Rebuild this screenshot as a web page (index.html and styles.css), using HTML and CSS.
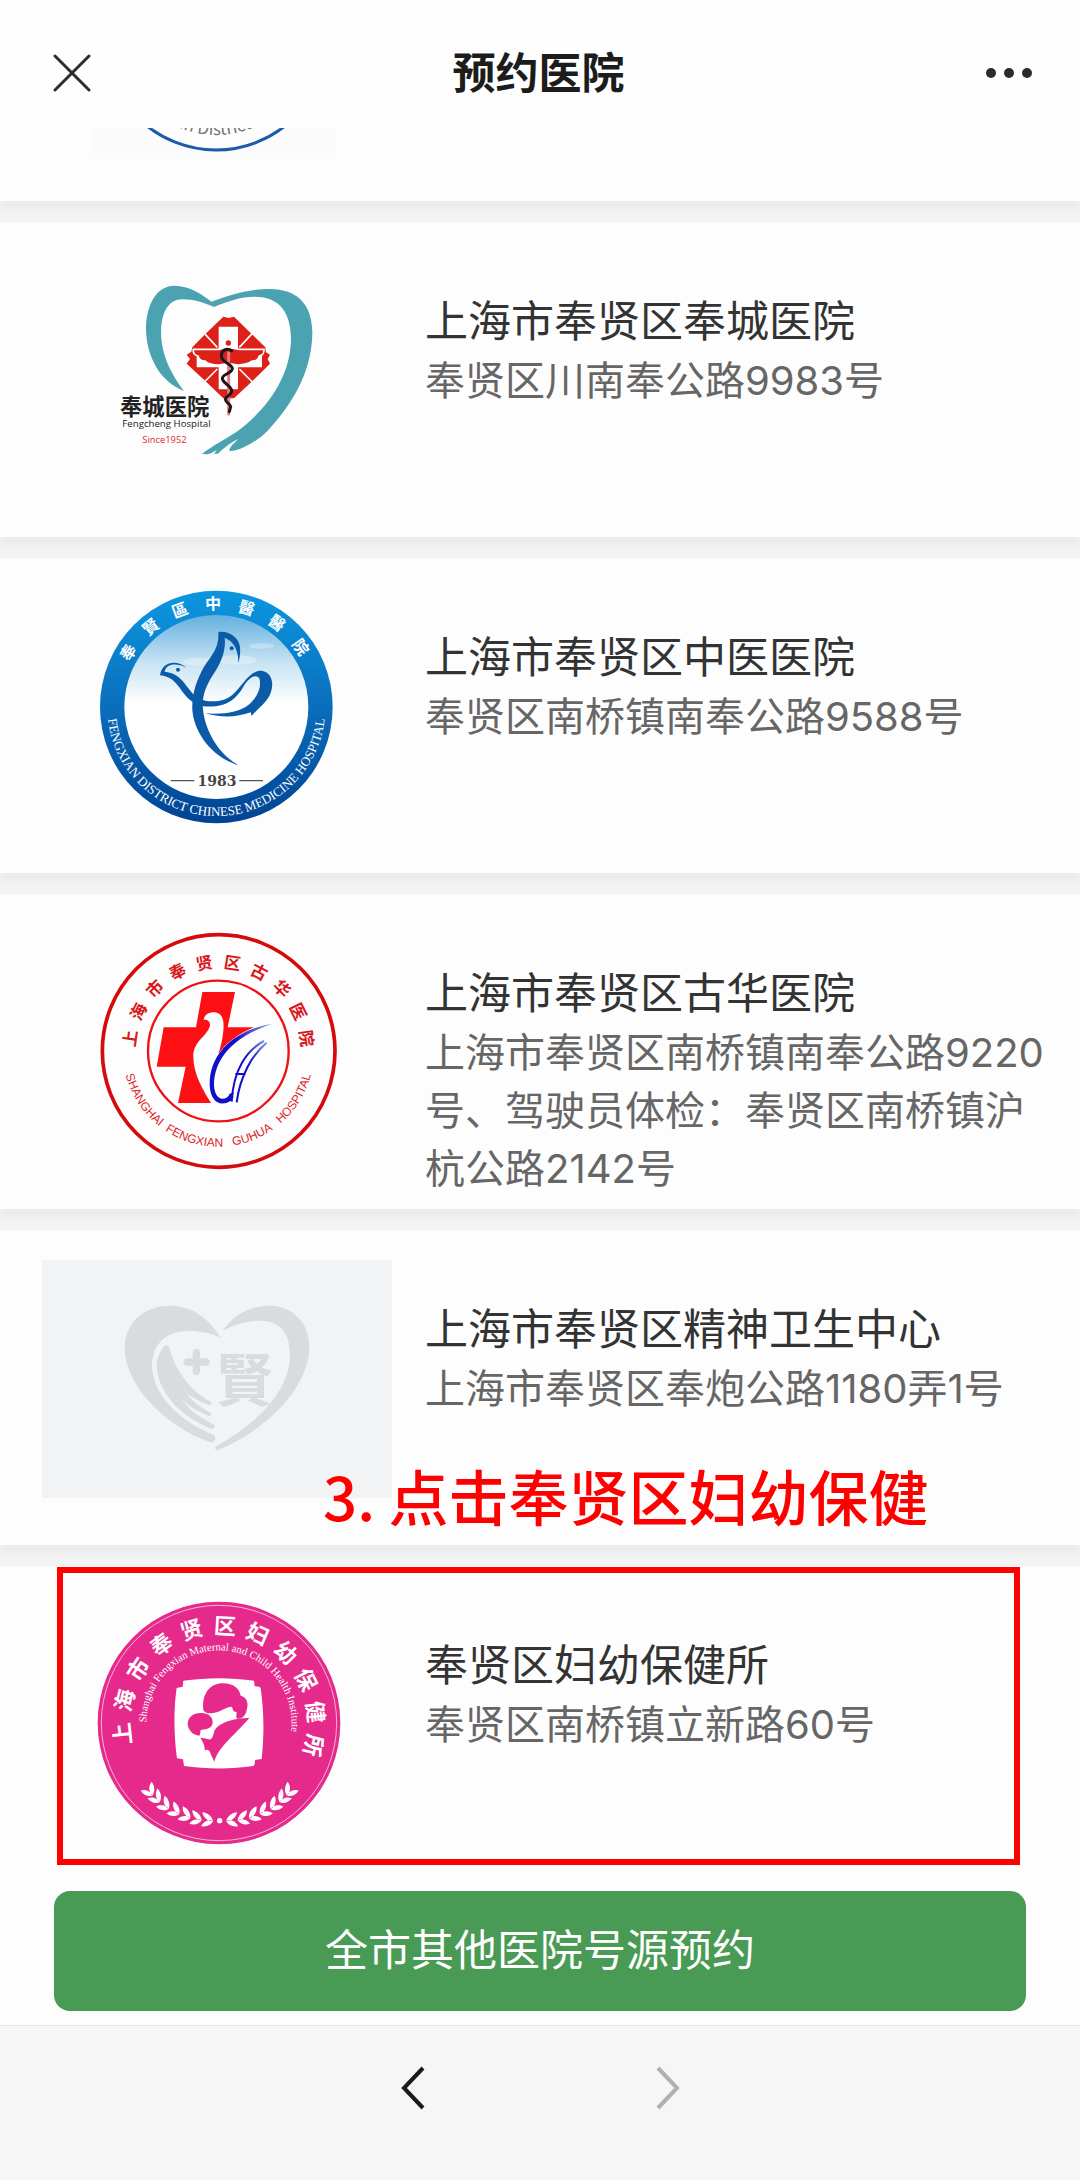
FILE: index.html
```html
<!DOCTYPE html>
<html lang="zh-CN">
<head>
  <meta charset="UTF-8">
  <meta name="viewport" content="width=device-width, initial-scale=1.0">
  <title>预约医院</title>
  <link rel="stylesheet" href="styles.css">
</head>
<body>
  <header class="topbar">
    <button class="icon-btn" type="button" aria-label="关闭">
      <svg width="38" height="38" viewBox="0 0 38 38" fill="none" stroke="#2b2b2b" stroke-width="3" stroke-linecap="round"><path d="M2 2L36 36M36 2L2 36"/></svg>
    </button>
    <h1>预约医院</h1>
    <button class="icon-btn" type="button" aria-label="更多">
      <svg width="46" height="38" viewBox="0 0 46 38" fill="#2b2b2b"><circle cx="5" cy="19" r="5"/><circle cx="23" cy="19" r="5"/><circle cx="41" cy="19" r="5"/></svg>
    </button>
  </header>

  <main class="hospital-list">
    <a class="card" href="#">
      <svg class="logo" viewBox="42 -84 350 238">
        <defs><path id="seal-arc" d="M120 39A96 96 0 0 0 312 39"/></defs>
        <rect x="94" y="-84" width="242" height="238" fill="#fbfbfb"/>
        <circle cx="216" cy="39" r="111" fill="#fdfdfd" stroke="#1d5aa8" stroke-width="3"/>
        <text font-size="17" fill="#777" text-anchor="middle"><textPath href="#seal-arc" startOffset="49%">an District</textPath></text>
      </svg>
    </a>

    <a class="card" href="#">
      <svg class="logo" viewBox="-114 -24 1050 714">
        <path fill="#4ba3b1" d="M395 125C360 100 330 78 283 77C225 78 198 140 198 210C200 290 240 365 312 393C280 350 243 290 243 215C245 150 270 118 305 118C345 118 370 128 402 141C440 125 480 110 525 110C600 110 632 160 633 235C633 350 560 450 470 515C440 535 395 558 366 582L382 583C395 580 402 573 411 569L402 581L414 581C430 565 455 545 475 537C462 550 446 563 449 573C475 575 530 545 560 515C650 420 697 320 697 215C695 130 650 88 570 87C510 86 440 108 395 125Z"/>
        <path fill="#dd2018" d="M430 170L446 174L462 170L515 222L556 262L558 277L570 284L563 297L570 311L515 365L462 415H430L376 363L320 311L330 297L320 284L334 275L337 262L376 222Z"/>
        <path stroke="#fff" stroke-width="5" d="M373 220L412 262M517 220L478 262M373 366L412 327M517 366L478 327"/>
        <path fill="#fff" d="M416 200H474V268H546V322H474V388H416V322H350V268H416Z"/>
        <path fill="#dd2018" stroke="#fff" stroke-width="5" d="M340 268H414L446 262L478 268H552C553 280 546 287 538 288C535 298 527 304 517 303C505 312 490 315 474 315L446 311L416 315C400 315 385 312 375 303C365 304 357 298 354 288C346 287 338 280 340 268Z"/>
        <circle cx="445" cy="249" r="8" fill="#dd2018"/>
        <path stroke="#e77b86" stroke-width="9" d="M446 275V466"/>
        <path fill="none" stroke="#1c1719" stroke-width="9" stroke-linecap="round" d="M455 272C440 262 424 270 424 288C424 308 455 310 457 325C458 340 427 342 427 355C427 370 452 375 455 392C456 405 438 408 436 418C438 430 450 430 452 440L448 455"/>
        <text x="120" y="466" font-size="67" font-weight="700" fill="#222">奉城医院</text>
        <text class="latin" x="127" y="500" font-size="29" fill="#222">Fengcheng Hospital</text>
        <text class="latin" x="187" y="550" font-size="28" fill="#e22b2b">Since1952</text>
      </svg>
      <div class="info">
        <h2>上海市奉贤区奉城医院</h2>
        <p>奉贤区川南奉公路9983号</p>
      </div>
    </a>

    <a class="card" href="#">
      <svg class="logo" viewBox="-114 54 1050 714">
        <defs>
          <linearGradient id="ring" x2="0" y2="1">
            <stop offset="0" stop-color="#0b97e0"/>
            <stop offset=".45" stop-color="#0b72c0"/>
            <stop offset="1" stop-color="#004394"/>
          </linearGradient>
          <linearGradient id="sky" x2="0" y2="1">
            <stop offset="0" stop-color="#63b0df"/>
            <stop offset=".25" stop-color="#c5e2f3"/>
            <stop offset=".48" stop-color="#fff"/>
          </linearGradient>
          <path id="tcm-top" d="M116 411A293 293 0 0 1 702 411"/>
          <path id="tcm-bottom" d="M82 391V411A327 327 0 0 0 736 411V391"/>
        </defs>
        <circle cx="409" cy="411" r="349" fill="url(#ring)"/>
        <circle cx="409" cy="411" r="276" fill="url(#sky)"/>
        <g fill="#fff" opacity=".3">
          <ellipse cx="365" cy="275" rx="55" ry="12"/>
          <ellipse cx="470" cy="270" rx="60" ry="14"/>
          <ellipse cx="545" cy="228" rx="38" ry="8"/>
        </g>
        <g fill="#0b5ba8">
          <path d="M415 186C450 182 478 205 480 232C482 250 478 265 476 279C474 250 470 218 434 203C439 240 422 280 405 305C385 335 368 365 368 405C370 470 410 550 475 585C400 565 342 490 337 420C335 370 350 330 372 290C398 255 418 230 415 186Z"/>
          <path d="M319 293C290 268 246 275 240 316C270 320 280 330 298 352C315 378 335 402 370 409C440 415 470 385 490 350C505 325 525 310 538 325C545 350 535 380 505 405C480 425 430 435 375 430C420 443 470 443 512 427L515 438C535 412 565 395 573 365C582 340 575 308 548 303C530 300 510 312 490 338C465 365 450 400 380 393C345 388 330 360 310 335C295 318 280 308 254 305C258 280 290 278 319 293Z"/>
          <circle cx="455" cy="235" r="6"/>
          <circle cx="294" cy="299" r="6"/>
        </g>
        <path stroke="#555" stroke-width="4" d="M272 632H343M478 632H549"/>
        <text class="year" x="411" y="647" font-size="42" font-weight="700" fill="#444" text-anchor="middle">1983</text>
        <text class="trad" font-size="48" fill="#fff" text-anchor="middle"><textPath href="#tcm-top" startOffset="49%"><tspan dx="0 48 48 48 48 48 48">奉賢區中醫醫院</tspan></textPath></text>
        <text class="serif" font-size="39" fill="#fff" text-anchor="middle"><textPath href="#tcm-bottom" startOffset="50%">FENGXIAN DISTRICT CHINESE MEDICINE HOSPITAL</textPath></text>
      </svg>
      <div class="info">
        <h2>上海市奉贤区中医医院</h2>
        <p>奉贤区南桥镇南奉公路9588号</p>
      </div>
    </a>

    <a class="card" href="#">
      <svg class="logo" viewBox="-114 42 1050 714">
        <defs>
          <path id="guhua-top" d="M166 423A249 249 0 0 1 664 423"/>
          <path id="guhua-bottom" d="M128 423A287 287 0 0 0 702 423"/>
          <linearGradient id="fade" x1="0" x2="1" y1="1" y2="0">
            <stop offset=".6" stop-color="#1010c8"/>
            <stop offset="1" stop-color="#8a9ae0"/>
          </linearGradient>
        </defs>
        <circle cx="416" cy="423" r="349" fill="none" stroke="#d40a0c" stroke-width="11"/>
        <circle cx="415" cy="423" r="211" fill="none" stroke="#ee1013" stroke-width="7"/>
        <path fill="#fd1014" d="M367 246H465L443 352H522C475 372 440 397 415 432C426 400 433 360 430 335C427 312 412 306 398 307C385 308 373 315 371 329C386 328 393 338 389 350C380 378 345 392 340 430C337 490 370 540 393 579H294L317 470H230L251 352H348Z"/>
        <path fill="url(#fade)" d="M577 342C470 358 388 425 389 525C391 575 420 592 452 573L462 547L449 551C440 575 404 575 402 525C402 440 470 375 577 342Z"/>
        <path fill="none" stroke="url(#fade)" stroke-width="6" d="M552 393C500 420 460 480 455 575M466 492H497M448 560H460M560 398C515 435 480 500 470 577"/>
        <text font-size="50" font-weight="700" fill="#d9161a" text-anchor="middle"><textPath href="#guhua-top" startOffset="50%"><tspan dx="0 29 29 29 29 29 29 29 29 29">上海市奉贤区古华医院</tspan></textPath></text>
        <text class="sans" font-size="36" fill="#dc2226" text-anchor="middle"><textPath href="#guhua-bottom" startOffset="50%">SHANGHAI &nbsp;FENGXIAN &nbsp;&nbsp;GUHUA &nbsp;&nbsp;HOSPITAL</textPath></text>
      </svg>
      <div class="info">
        <h2>上海市奉贤区古华医院</h2>
        <p>上海市奉贤区南桥镇南奉公路9220号、驾驶员体检：奉贤区南桥镇沪杭公路2142号</p>
      </div>
    </a>

    <a class="card" href="#">
      <svg class="logo placeholder" viewBox="36 60 1050 714">
        <g fill="#d8dcdf">
          <path d="M572 293C540 240 490 197 420 197C340 197 284 250 284 325C284 430 400 560 543 607C553 608 560 595 553 585C460 550 366 470 366 375C368 310 410 273 475 273C515 273 545 280 572 293Z"/>
          <path d="M577 273C610 225 660 197 718 197C790 197 838 250 838 320C838 430 730 560 563 631C556 631 553 625 558 619C700 540 780 440 780 345C780 280 750 242 690 242C650 242 610 255 577 273Z"/>
          <path d="M410 316C416 316 419 322 420 330C440 400 490 460 543 485C546 490 542 496 538 495C510 487 490 474 470 460C490 490 520 506 543 519C545 525 541 529 536 527C505 517 480 500 458 480C480 515 520 538 553 554C557 561 550 568 543 566C450 530 380 455 380 370C385 345 395 320 410 316Z"/>
          <text class="trad" x="557" y="483" font-size="172">賢</text>
        </g>
        <path stroke="#d8dcdf" stroke-width="22" stroke-linecap="round" d="M499 338V394M472 366H528"/>
      </svg>
      <div class="info">
        <h2>上海市奉贤区精神卫生中心</h2>
        <p>上海市奉贤区奉炮公路1180弄1号</p>
      </div>
    </a>

    <a class="card" href="#">
      <svg class="logo" viewBox="-24 138 1050 714">
        <defs>
          <path id="mch-outer" d="M507 786A267 267 0 0 1 507 252A267 267 0 0 1 507 786"/>
          <path id="mch-inner" d="M507 737A218 218 0 0 1 507 301A218 218 0 0 1 507 737"/>
          <path id="leaves" d="M0 0C-16 2 -30 -8 -34 -24C-18 -24 -4 -14 0 0ZM0 0C-8 -4 -28 0 -34 18C-18 20 -4 12 0 0Z"/>
          <g id="branch">
            <use href="#leaves" transform="translate(307 737) rotate(52)"/>
            <use href="#leaves" transform="translate(329 757) rotate(46)"/>
            <use href="#leaves" transform="translate(356 777) rotate(38)"/>
            <use href="#leaves" transform="translate(388 792) rotate(30)"/>
            <use href="#leaves" transform="translate(421 804) rotate(22)"/>
            <use href="#leaves" transform="translate(455 811) rotate(12)"/>
            <use href="#leaves" transform="translate(489 813) rotate(4)"/>
          </g>
        </defs>
        <circle cx="507" cy="519" r="364" fill="#e52a8b"/>
        <circle cx="507" cy="519" r="353" fill="none" stroke="#f7b3d6" stroke-width="3"/>
        <path fill="#fff" d="M400 392C470 382 545 382 612 392L614 409Q632 409 632 415C643 490 642 560 635 627L615 630Q615 645 610 648C545 658 470 658 402 648L399 628L381 625C372 560 370 480 380 414L398 410Z"/>
        <g fill="#e52a8b">
          <path d="M460 480C455 430 480 400 520 400C550 400 568 415 572 437C590 440 597 460 590 480C587 498 575 507 562 506C555 500 562 490 559 486C548 485 549 478 546 470C530 470 520 480 500 487C480 493 465 490 460 480Z"/>
          <path d="M452 489C475 488 488 500 488 517C488 532 475 538 452 540C450 548 452 552 448 557C430 557 413 540 413 520C415 500 430 489 452 489Z"/>
          <path d="M598 504C560 503 510 515 494 540C488 560 488 570 475 568C468 567 460 562 452 565C458 575 466 590 464 602C472 596 480 602 482 612L493 635C505 590 550 560 598 504Z"/>
        </g>
        <g fill="#fff">
          <use href="#branch"/>
          <use href="#branch" transform="translate(1018 0) scale(-1 1)"/>
          <circle cx="509" cy="812" r="8"/>
        </g>
        <text font-size="66" font-weight="700" fill="#fff" text-anchor="middle"><textPath href="#mch-outer" startOffset="51%"><tspan dx="0 27 27 27 27 27 27 27 27 27 27">上海市奉贤区妇幼保健所</tspan></textPath></text>
        <text class="serif" font-size="32" fill="#fff" text-anchor="middle"><textPath href="#mch-inner" startOffset="51%">Shanghai Fengxian Maternal and Child Health Institute</textPath></text>
      </svg>
      <div class="info">
        <h2>奉贤区妇幼保健所</h2>
        <p>奉贤区南桥镇立新路60号</p>
      </div>
      <span class="guide"><span class="guide-text">3. 点击奉贤区妇幼保健</span></span>
    </a>
  </main>

  <div class="action-bar">
    <button class="book-btn" type="button">全市其他医院号源预约</button>
  </div>

  <nav class="bottom-nav">
    <button class="icon-btn" type="button" aria-label="后退">
      <svg width="24" height="44" viewBox="0 0 24 44" fill="none" stroke="#1a1a1a" stroke-width="4"><path d="M22 2L3 22L22 42"/></svg>
    </button>
    <button class="icon-btn" type="button" aria-label="前进">
      <svg width="24" height="44" viewBox="0 0 24 44" fill="none" stroke="#b0b0b0" stroke-width="4"><path d="M2 2L21 22L2 42"/></svg>
    </button>
  </nav>
</body>
</html>
```
FILE: styles.css
```css
* {
  box-sizing: border-box;
  margin: 0;
  padding: 0;
}

body {
  height: 100vh;
  display: flex;
  flex-direction: column;
  font-family: Inter, "Noto Sans CJK SC", sans-serif;
  background: #f3f3f3;
  color: #333;
}

button {
  border: none;
  background: none;
  font-family: inherit;
  cursor: pointer;
}

.icon-btn svg {
  display: block;
}

.topbar {
  flex: none;
  height: 128px;
  padding: 18px 48px 0 53px;
  display: flex;
  justify-content: space-between;
  align-items: center;
  background: #fefefe;
}

.topbar h1 {
  font-size: 43px;
  line-height: 60px;
  font-weight: 700;
  color: #1c1c1c;
}

/* list is scrolled to its end */
.hospital-list {
  flex: 1;
  min-height: 0;
  overflow: hidden;
  display: flex;
  flex-direction: column;
  justify-content: flex-end;
  gap: 21px;
}

.card {
  position: relative;
  flex: none;
  min-height: 315px;
  padding: 30px 24px 0 42px;
  display: flex;
  align-items: flex-start;
  gap: 33px;
  background: #fdfdfd;
  box-shadow: 0 8px 6px rgba(0, 0, 0, 0.03);
  color: inherit;
  text-decoration: none;
}

/* round seals are a little taller than the box */
.logo {
  flex: none;
  width: 350px;
  height: 238px;
  overflow: visible;
  font-family: "Noto Sans CJK SC", sans-serif;
}

.placeholder {
  background: #f1f3f5;
}

.logo .latin {
  font-family: "Open Sans", sans-serif;
}

.logo .sans {
  font-family: "Liberation Sans", sans-serif;
}

.logo .serif {
  font-family: "Liberation Serif", serif;
}

.logo .year {
  font-family: "DejaVu Serif", serif;
}

.logo .trad {
  font-family: "Noto Sans CJK TC", sans-serif;
  font-weight: 700;
}

.info {
  flex: 1;
  padding-top: 38px;
}

.info h2 {
  font-size: 43px;
  line-height: 62px;
  font-weight: 400;
}

.info p {
  font-size: 40px;
  line-height: 58px;
  color: #666;
}

/* red guide frame over the last card */
.guide {
  position: absolute;
  top: 1px;
  right: 60px;
  bottom: 16px;
  left: 57px;
  border: 6px solid #ff0000;
}

.guide-text {
  position: absolute;
  left: 260px;
  bottom: 100%;
  padding-bottom: 38px;
  font-family: "Noto Sans CJK SC", sans-serif;
  font-size: 60px;
  line-height: 80px;
  font-weight: 500;
  color: #ff0000;
  white-space: nowrap;
}

.action-bar {
  flex: none;
  padding: 10px 54px 14px;
  background: #fdfdfd;
}

.book-btn {
  width: 100%;
  height: 120px;
  padding-bottom: 8px;
  border-radius: 16px;
  background: #489a54;
  color: #fff;
  font-size: 43px;
}

.bottom-nav {
  flex: none;
  height: 155px;
  padding-top: 40px;
  display: flex;
  justify-content: center;
  align-items: flex-start;
  gap: 231px;
  background: #f6f6f6;
  border-top: 1px solid #e6e6e6;
}
```
